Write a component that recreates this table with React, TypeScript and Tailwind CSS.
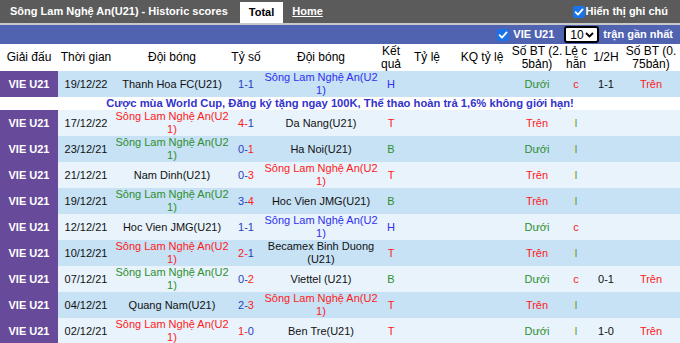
import React from 'react';

type Tone = 'k' | 'r' | 'g' | 'b';

interface Match {
  date: string;
  home: string;
  homeTone: Tone;
  score: [number, number];
  away: string;
  awayTone: Tone;
  res: 'T' | 'B' | 'H';
  ou: 'Trên' | 'Dưới';
  oe: 'l' | 'c';
  half?: string;
  ou75?: string;
}

const toneClass: Record<Tone, string> = {
  k: 'text-[#111111]',
  r: 'text-[#ff1a1a]',
  g: 'text-[#2f8f2f]',
  b: 'text-[#3030f0]',
};

const resClass = {
  T: 'text-[#ff1a1a]',
  B: 'text-[#2f8f2f]',
  H: 'text-[#3030f0]',
};

const SLNA = 'Sông Lam Nghệ An(U2\n1)';

const matches: Match[] = [
  { date: '19/12/22', home: 'Thanh Hoa FC(U21)', homeTone: 'k', score: [1, 1], away: SLNA, awayTone: 'b', res: 'H', ou: 'Dưới', oe: 'c', half: '1-1', ou75: 'Trên' },
  { date: '17/12/22', home: SLNA, homeTone: 'r', score: [4, 1], away: 'Da Nang(U21)', awayTone: 'k', res: 'T', ou: 'Trên', oe: 'l' },
  { date: '23/12/21', home: SLNA, homeTone: 'g', score: [0, 1], away: 'Ha Noi(U21)', awayTone: 'k', res: 'B', ou: 'Dưới', oe: 'l' },
  { date: '21/12/21', home: 'Nam Dinh(U21)', homeTone: 'k', score: [0, 3], away: SLNA, awayTone: 'r', res: 'T', ou: 'Trên', oe: 'l' },
  { date: '19/12/21', home: SLNA, homeTone: 'g', score: [3, 4], away: 'Hoc Vien JMG(U21)', awayTone: 'k', res: 'B', ou: 'Trên', oe: 'l' },
  { date: '12/12/21', home: 'Hoc Vien JMG(U21)', homeTone: 'k', score: [1, 1], away: SLNA, awayTone: 'b', res: 'H', ou: 'Dưới', oe: 'c' },
  { date: '10/12/21', home: SLNA, homeTone: 'r', score: [2, 1], away: 'Becamex Binh Duong\n(U21)', awayTone: 'k', res: 'T', ou: 'Trên', oe: 'l' },
  { date: '07/12/21', home: SLNA, homeTone: 'g', score: [0, 2], away: 'Viettel (U21)', awayTone: 'k', res: 'B', ou: 'Dưới', oe: 'c', half: '0-1', ou75: 'Trên' },
  { date: '04/12/21', home: 'Quang Nam(U21)', homeTone: 'k', score: [2, 3], away: SLNA, awayTone: 'r', res: 'T', ou: 'Trên', oe: 'l' },
  { date: '02/12/21', home: SLNA, homeTone: 'r', score: [1, 0], away: 'Ben Tre(U21)', awayTone: 'k', res: 'T', ou: 'Dưới', oe: 'l', half: '1-0', ou75: 'Trên' },
];

const grid =
  'grid grid-cols-[58px_56px_116px_32px_118px_22px_50px_60px_50px_28px_32px_58px]';

const CheckBox = () => (
  <svg width="12" height="12" viewBox="0 0 12 12" className="shrink-0">
    <rect x="0" y="0" width="12" height="12" rx="2" fill="#1a73e8" />
    <path d="M2.6 6.2 L5 8.6 L9.6 3.4" fill="none" stroke="#ffffff" strokeWidth="1.8" strokeLinecap="round" strokeLinejoin="round" />
  </svg>
);

const scoreTone = (a: number, b: number) => {
  if (a === b) return ['text-[#2a3fc0]', 'text-[#2a3fc0]'];
  return a > b ? ['text-[#ff1a1a]', 'text-[#2a3fc0]'] : ['text-[#2a3fc0]', 'text-[#ff1a1a]'];
};

const MatchRow: React.FC<{ m: Match; dark: boolean }> = ({ m, dark }) => {
  const [ha, hb] = scoreTone(m.score[0], m.score[1]);
  const bg = dark ? 'bg-[#c7e1f5]' : 'bg-[#e8f3fc]';
  return (
    <div className={`${grid} h-[26px] text-[11px] leading-[13px]`}>
      <div className="bg-[#684a9b] text-white font-bold flex items-center justify-center">VIE U21</div>
      <div className={`${bg} col-span-11 grid grid-cols-subgrid`}>
        <div className="flex items-center justify-center text-[#111111]">{m.date}</div>
        <div className={`flex items-center justify-center text-center whitespace-pre-line ${toneClass[m.homeTone]}`}>{m.home}</div>
        <div className="flex items-center justify-center">
          <span className={ha}>{m.score[0]}-</span>
          <span className={hb}>{m.score[1]}</span>
        </div>
        <div className={`flex items-center justify-center text-center whitespace-pre-line ${toneClass[m.awayTone]}`}>{m.away}</div>
        <div className={`flex items-center justify-center ${resClass[m.res]}`}>{m.res}</div>
        <div />
        <div />
        <div className={`flex items-center justify-center ${m.ou === 'Trên' ? 'text-[#ff1a1a]' : 'text-[#2f8f2f]'}`}>{m.ou}</div>
        <div className={`flex items-center justify-center ${m.oe === 'c' ? 'text-[#ff1a1a]' : 'text-[#5f9a2a]'}`}>{m.oe}</div>
        <div className="flex items-center justify-center text-[#111111]">{m.half}</div>
        <div className="flex items-center justify-center text-[#ff1a1a]">{m.ou75}</div>
      </div>
    </div>
  );
};

export default function App() {
  return (
    <div className="w-[680px] h-[343px] overflow-hidden bg-white font-['Liberation_Sans',Arial,sans-serif]">
      {/* title bar */}
      <div className="h-[23px] bg-[#5b5b5b] flex items-end text-[11px] font-bold">
        <div className="h-full flex items-center pl-[10px] text-white">Sông Lam Nghệ An(U21) - Historic scores</div>
        <div className="ml-[12px] h-[21px] px-[9px] bg-white flex items-center text-black">Total</div>
        <div className="ml-[9px] h-full flex items-center text-white underline">Home</div>
        <div className="ml-auto h-full flex items-center gap-[1px] pr-[12px] text-white">
          <CheckBox />
          <span>Hiển thị ghi chú</span>
        </div>
      </div>
      <div className="h-[2px] bg-[#c9c9c9]" />
      {/* filter bar */}
      <div className="h-[19px] bg-[#4f63b1] flex items-center justify-end pr-[7px] text-[11px] font-bold text-white">
        <CheckBox />
        <span className="ml-[4px]">VIE U21</span>
        <div className="ml-[10px] h-[17px] w-[35px] rounded-[3px] border-2 border-black bg-white flex items-center justify-between pl-[4px] pr-[3px] text-black font-normal text-[12px]">
          <span>10</span>
          <svg width="9" height="6" viewBox="0 0 9 6">
            <path d="M1 1 L4.5 4.5 L8 1" fill="none" stroke="#000" strokeWidth="1.8" />
          </svg>
        </div>
        <span className="ml-[4px]">trận gần nhất</span>
      </div>
      {/* header */}
      <div className={`${grid} h-[27px] text-[12px] leading-[13px] text-black whitespace-nowrap`}>
        <div className="flex items-center justify-center">Giải đấu</div>
        <div className="flex items-center justify-center">Thời gian</div>
        <div className="flex items-center justify-center">Đội bóng</div>
        <div className="flex items-center justify-center">Tỷ số</div>
        <div className="flex items-center justify-center">Đội bóng</div>
        <div className="flex items-center justify-center text-center">Kết<br />quả</div>
        <div className="flex items-center justify-center">Tỷ lệ</div>
        <div className="flex items-center justify-center">KQ tỷ lệ</div>
        <div className="flex items-center justify-center text-center">Số BT (2.<br />5bản)</div>
        <div className="flex items-center justify-center text-center">Lẻ c<br />hẵn</div>
        <div className="flex items-center justify-center">1/2H</div>
        <div className="flex items-center justify-center text-center">Số BT (0.<br />75bản)</div>
      </div>
      {matches.map((m, i) => (
        <React.Fragment key={m.date + i}>
          <MatchRow m={m} dark={i % 2 === 0} />
          {i === 0 && (
            <div className="h-[13px] flex items-center justify-center text-[11.2px] font-bold text-[#3333cc] whitespace-nowrap">
              Cược mùa World Cup, Đăng ký tặng ngay 100K, Thể thao hoàn trả 1,6% không giới hạn!
            </div>
          )}
        </React.Fragment>
      ))}
    </div>
  );
}
